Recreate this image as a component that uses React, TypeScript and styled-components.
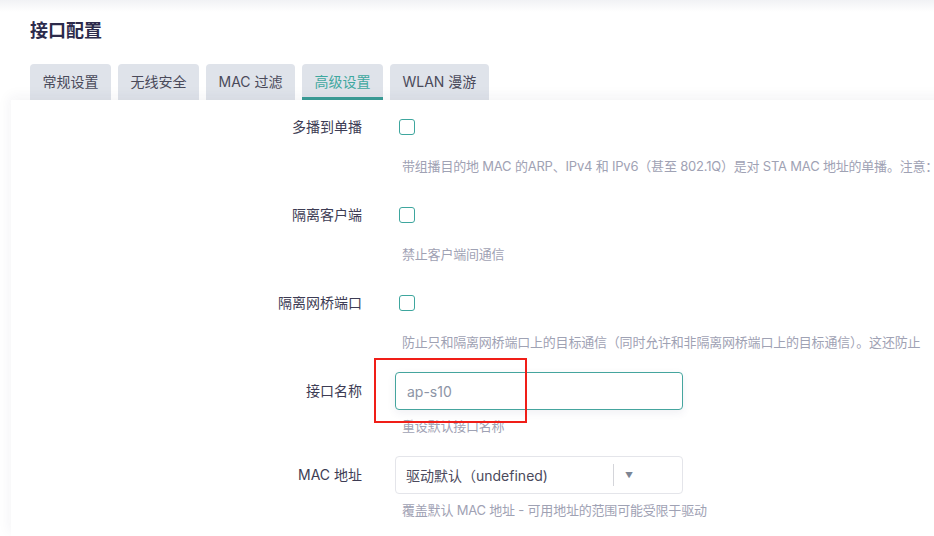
import React from "react";
import styled, { createGlobalStyle } from "styled-components";

const Global = createGlobalStyle`
  html, body { margin: 0; padding: 0; background: #ffffff; overflow: hidden; }
  body { font-family: "Inter", "Noto Sans CJK SC", "Noto Sans", sans-serif; }
  * { box-sizing: border-box; }
`;

const Page = styled.div`
  width: 934px;
  height: 536px;
  overflow: hidden;
  display: flex;
  flex-direction: column;
  background: linear-gradient(#f1f2f5 0px, #ffffff 12px);
`;

const Header = styled.div`
  padding: 19px 0 0 30px;
`;

const Title = styled.h2`
  margin: 0;
  height: 24px;
  line-height: 24px;
  font-size: 18px;
  font-weight: 700;
  color: #2c2b4b;
`;

const Tabs = styled.div`
  display: flex;
  gap: 7px;
  margin-top: 21px;
`;

const Tab = styled.div<{ $active?: boolean }>`
  height: 36px;
  padding: 0 12.5px 3px;
  display: flex;
  align-items: center;
  font-size: 14px;
  background: #dfe3ea;
  border-radius: 4px 4px 0 0;
  color: ${(p) => (p.$active ? "#3fa8a0" : "#4a4a5a")};
  box-shadow: ${(p) => (p.$active ? "inset 0 -3px 0 #3a9d97" : "none")};
  white-space: nowrap;
`;

const Card = styled.div`
  flex: 1;
  margin-left: 11px;
  width: 940px;
  background: #ffffff;
  padding-top: 8px;
  box-shadow: -2px -4px 12px rgba(40, 40, 70, 0.05);
  display: flex;
  flex-direction: column;
  gap: 20px;
`;

const Row = styled.div`
  display: grid;
  grid-template-columns: 351px 1fr;
  column-gap: 33px;
`;

const Label = styled.div`
  height: 38px;
  padding-bottom: 2px;
  display: flex;
  align-items: center;
  justify-content: flex-end;
  font-size: 14px;
  color: #3d3c54;
  white-space: nowrap;
`;

const Field = styled.div`
  display: flex;
  flex-direction: column;
  min-width: 0;
`;

const Control = styled.div`
  position: relative;
  height: 38px;
  display: flex;
  align-items: center;
`;

const Check = styled.input`
  appearance: none;
  -webkit-appearance: none;
  width: 16px;
  height: 16px;
  margin: 0 0 0 4px;
  border: 1px solid #3ea69e;
  border-radius: 3px;
  background: #fff;
`;

const TextInput = styled.input`
  width: 288px;
  height: 38px;
  padding: 0 11px;
  border: 1px solid #45a59e;
  border-radius: 4px;
  font-family: inherit;
  font-size: 14px;
  color: #3d3c54;
  outline: none;
  box-shadow: 0 3px 8px rgba(60, 70, 110, 0.08);
  &::placeholder { color: #8d95a6; }
`;

const Select = styled.div`
  width: 288px;
  height: 38px;
  border: 1px solid #e4e5ea;
  border-radius: 4px;
  display: flex;
  align-items: center;
  padding-left: 10px;
  padding-right: 38px;
  font-size: 14px;
  color: #4b4a5c;
`;

const SelectText = styled.span`
  flex: 1;
  white-space: nowrap;
`;

const Divider = styled.span`
  width: 1px;
  height: 22px;
  background: #d4d5da;
`;

const Arrow = styled.span`
  width: 30px;
  display: flex;
  justify-content: center;
  color: #7c8594;
  font-size: 8px;
`;

const Desc = styled.div<{ $gap: number }>`
  margin-top: ${(p) => p.$gap}px;
  padding-left: 7px;
  height: 20px;
  line-height: 20px;
  font-size: 13px;
  letter-spacing: -0.2px;
  color: #9fa2b4;
  white-space: nowrap;
`;

const Annotation = styled.div`
  position: absolute;
  left: -21px;
  top: -14px;
  width: 153px;
  height: 65px;
  border: 2px solid #f01e18;
  pointer-events: none;
`;

type Item = {
  label: string;
  kind: "check" | "input" | "select";
  desc: string;
};

const items: Item[] = [
  {
    label: "多播到单播",
    kind: "check",
    desc: "带组播目的地 MAC 的ARP、IPv4 和 IPv6（甚至 802.1Q）是对 STA MAC 地址的单播。注意：",
  },
  { label: "隔离客户端", kind: "check", desc: "禁止客户端间通信" },
  {
    label: "隔离网桥端口",
    kind: "check",
    desc: "防止只和隔离网桥端口上的目标通信（同时允许和非隔离网桥端口上的目标通信）。这还防止",
  },
  { label: "接口名称", kind: "input", desc: "重设默认接口名称" },
  { label: "MAC 地址", kind: "select", desc: "覆盖默认 MAC 地址 - 可用地址的范围可能受限于驱动" },
];

const tabs = ["常规设置", "无线安全", "MAC 过滤", "高级设置", "WLAN 漫游"];

export default function App() {
  return (
    <Page>
      <Global />
      <Header>
        <Title>接口配置</Title>
        <Tabs>
          {tabs.map((t) => (
            <Tab key={t} $active={t === "高级设置"}>
              {t}
            </Tab>
          ))}
        </Tabs>
      </Header>
      <Card>
        {items.map((it) => (
          <Row key={it.label}>
            <Label>{it.label}</Label>
            <Field>
              <Control>
                {it.kind === "check" && <Check type="checkbox" />}
                {it.kind === "input" && (
                  <>
                    <TextInput placeholder="ap-s10" />
                    <Annotation />
                  </>
                )}
                {it.kind === "select" && (
                  <Select>
                    <SelectText>驱动默认（undefined)</SelectText>
                    <Divider />
                    <Arrow>▼</Arrow>
                  </Select>
                )}
              </Control>
              <Desc $gap={it.kind === "check" ? 10 : 6}>{it.desc}</Desc>
            </Field>
          </Row>
        ))}
      </Card>
    </Page>
  );
}
